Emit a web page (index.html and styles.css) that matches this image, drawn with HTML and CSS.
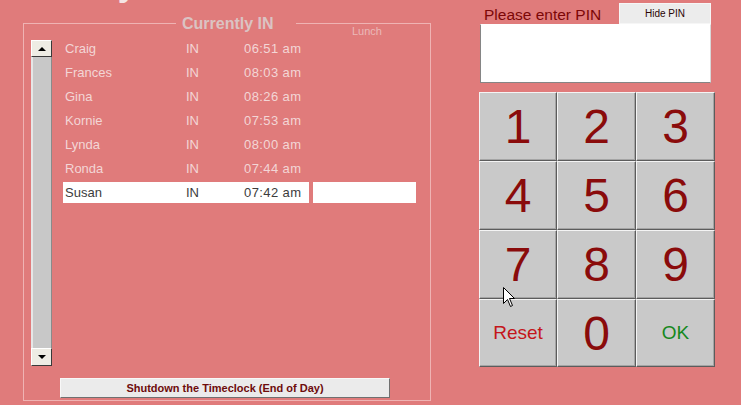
FILE: index.html
```html
<!DOCTYPE html>
<html>
<head>
<meta charset="utf-8">
<link rel="stylesheet" href="styles.css">
</head>
<body>
<div class="page">
  <div class="left">
    <div class="title">Today</div>
    <div class="group">
      <div class="legend-row">
        <div class="legend">Currently IN</div>
        <div class="lunch-head">Lunch</div>
      </div>
      <div class="body">
        <div class="scrollbar">
          <div class="sb-btn"><span class="tri up"></span></div>
          <div class="sb-track"></div>
          <div class="sb-btn down"><span class="tri dn"></span></div>
        </div>
        <div class="list">
          <div class="row"><div class="main"><span class="name">Craig</span><span class="in">IN</span><span class="time">06:51 am</span></div></div>
          <div class="row"><div class="main"><span class="name">Frances</span><span class="in">IN</span><span class="time">08:03 am</span></div></div>
          <div class="row"><div class="main"><span class="name">Gina</span><span class="in">IN</span><span class="time">08:26 am</span></div></div>
          <div class="row"><div class="main"><span class="name">Kornie</span><span class="in">IN</span><span class="time">07:53 am</span></div></div>
          <div class="row"><div class="main"><span class="name">Lynda</span><span class="in">IN</span><span class="time">08:00 am</span></div></div>
          <div class="row"><div class="main"><span class="name">Ronda</span><span class="in">IN</span><span class="time">07:44 am</span></div></div>
          <div class="row sel"><div class="main"><span class="name">Susan</span><span class="in">IN</span><span class="time">07:42 am</span></div><div class="lunch-cell"></div></div>
        </div>
      </div>
      <div class="shutdown">Shutdown the Timeclock (End of Day)</div>
    </div>
  </div>
  <div class="right">
    <div class="pin-head">
      <span class="pin-label">Please enter PIN</span>
      <span class="hide-btn">Hide PIN</span>
    </div>
    <div class="pin-box"></div>
    <div class="keypad">
      <div class="key">1</div><div class="key">2</div><div class="key">3</div>
      <div class="key">4</div><div class="key">5</div><div class="key">6</div>
      <div class="key">7</div><div class="key">8</div><div class="key">9</div>
      <div class="key reset">Reset</div><div class="key">0</div><div class="key ok">OK</div>
    </div>
  </div>
</div>
<svg class="cursor" width="13" height="21" viewBox="0 0 13 21">
  <path d="M0.5 0.5 L0.5 16.5 L4.5 12.5 L7.5 19.5 L9.5 18.5 L6.5 11.5 L11.5 11.5 Z" fill="#fff" stroke="#000" stroke-width="1"/>
</svg>
</body>
</html>
```
FILE: styles.css
```css
html, body {
  margin: 0;
  padding: 0;
}
body {
  width: 741px;
  height: 405px;
  overflow: hidden;
  background: #e07b7b;
  font-family: "Liberation Sans", Arial, sans-serif;
  position: relative;
}
.page {
  display: flex;
  align-items: flex-start;
}
.left {
  margin-left: 23px;
  width: 408px;
}
.title {
  margin: -33px 0 0 16px;
  height: 33px;
  font: bold 34px/34px "Liberation Sans", Arial, sans-serif;
  color: #f4e4e4;
}
.group {
  margin-top: 23px;
  box-sizing: border-box;
  width: 408px;
  height: 378px;
  border: 1px solid #efb3b3;
}
.legend-row {
  display: flex;
  align-items: flex-end;
  height: 22px;
  margin-top: -11px;
}
.legend {
  margin-left: 152px;
  box-sizing: border-box;
  width: 120px;
  padding-left: 6px;
  background: #e07b7b;
  font: bold 16px/22px "Liberation Sans", Arial, sans-serif;
  color: #dbc3c3;
}
.lunch-head {
  margin-left: 56px;
  margin-bottom: -3px;
  font-size: 11px;
  line-height: 13px;
  color: #ebb9b9;
}
.body {
  display: flex;
  align-items: flex-start;
  margin: 5px 0 0 7px;
}
.scrollbar {
  width: 21px;
  height: 326px;
  display: flex;
  flex-direction: column;
}
.sb-btn {
  box-sizing: border-box;
  height: 17px;
  background: #eeece4;
  border: 1px solid;
  border-color: #ffffff #3a3a3a #3a3a3a #ffffff;
  display: flex;
  align-items: center;
  justify-content: center;
}
.sb-btn.down {
  height: 18px;
}
.tri {
  width: 0;
  height: 0;
  border-left: 4px solid transparent;
  border-right: 4px solid transparent;
}
.tri.up {
  border-bottom: 4px solid #000;
}
.tri.dn {
  border-top: 4px solid #000;
}
.sb-track {
  flex: 1;
  box-sizing: border-box;
  background: #c8c8c8;
  border-left: 2px solid #e6e6e6;
  border-right: 1px solid #8a8a8a;
}
.list {
  margin: -2px 0 0 11px;
  display: flex;
  flex-direction: column;
  gap: 3px;
}
.row {
  display: flex;
  height: 21px;
  font-size: 13px;
  color: #f3d6d6;
}
.main {
  display: flex;
  align-items: center;
  width: 246px;
  height: 21px;
}
.name {
  box-sizing: border-box;
  width: 123px;
  padding-left: 2px;
}
.in {
  width: 58px;
}
.time {
  width: 65px;
  letter-spacing: 0.4px;
}
.row.sel .main {
  background: #ffffff;
  color: #3c3c3c;
}
.lunch-cell {
  margin-left: 4px;
  width: 103px;
  height: 21px;
  background: #ffffff;
}
.shutdown {
  margin: 12px 0 0 36px;
  box-sizing: border-box;
  width: 330px;
  height: 20px;
  background: #ebebeb;
  border: 1px solid;
  border-color: #f8f8f8 #707070 #707070 #f8f8f8;
  font: bold 11px/18px "Liberation Sans", Arial, sans-serif;
  color: #6e0c0c;
  text-align: center;
}
.right {
  margin-left: 48px;
  width: 236px;
}
.pin-head {
  display: flex;
  align-items: flex-start;
  margin-top: 3px;
  height: 21px;
}
.pin-label {
  padding: 2px 0 0 5px;
  font-size: 15.5px;
  line-height: 19px;
  color: #7c0707;
}
.hide-btn {
  margin-left: auto;
  margin-right: 4px;
  box-sizing: border-box;
  width: 92px;
  height: 21px;
  background: #ececec;
  border: 1px solid #f6f6f6;
  font-size: 10px;
  line-height: 19px;
  color: #2a0505;
  text-align: center;
}
.pin-box {
  margin: 0 4px 0 1px;
  box-sizing: border-box;
  height: 59px;
  background: #ffffff;
  border: 1px solid;
  border-color: #ffffff #d8d8d8 #858585 #858585;
}
.keypad {
  margin-top: 9px;
  display: grid;
  grid-template-columns: 78px 79px 79px;
  grid-template-rows: 69px 69px 69px 68px;
}
.key {
  box-sizing: border-box;
  background: #c9c9c9;
  border: 1px solid;
  border-color: #f4f4f4 #5c5c5c #5c5c5c #f4f4f4;
  box-shadow: inset -1px -1px 0 #a4a4a4;
  display: flex;
  align-items: center;
  justify-content: center;
  font-size: 48px;
  color: #8a0b0b;
}
.key.reset {
  font-size: 19px;
  color: #c4161b;
}
.key.ok {
  font-size: 19px;
  color: #15881e;
}
.cursor {
  position: absolute;
  left: 503px;
  top: 287px;
}
```
